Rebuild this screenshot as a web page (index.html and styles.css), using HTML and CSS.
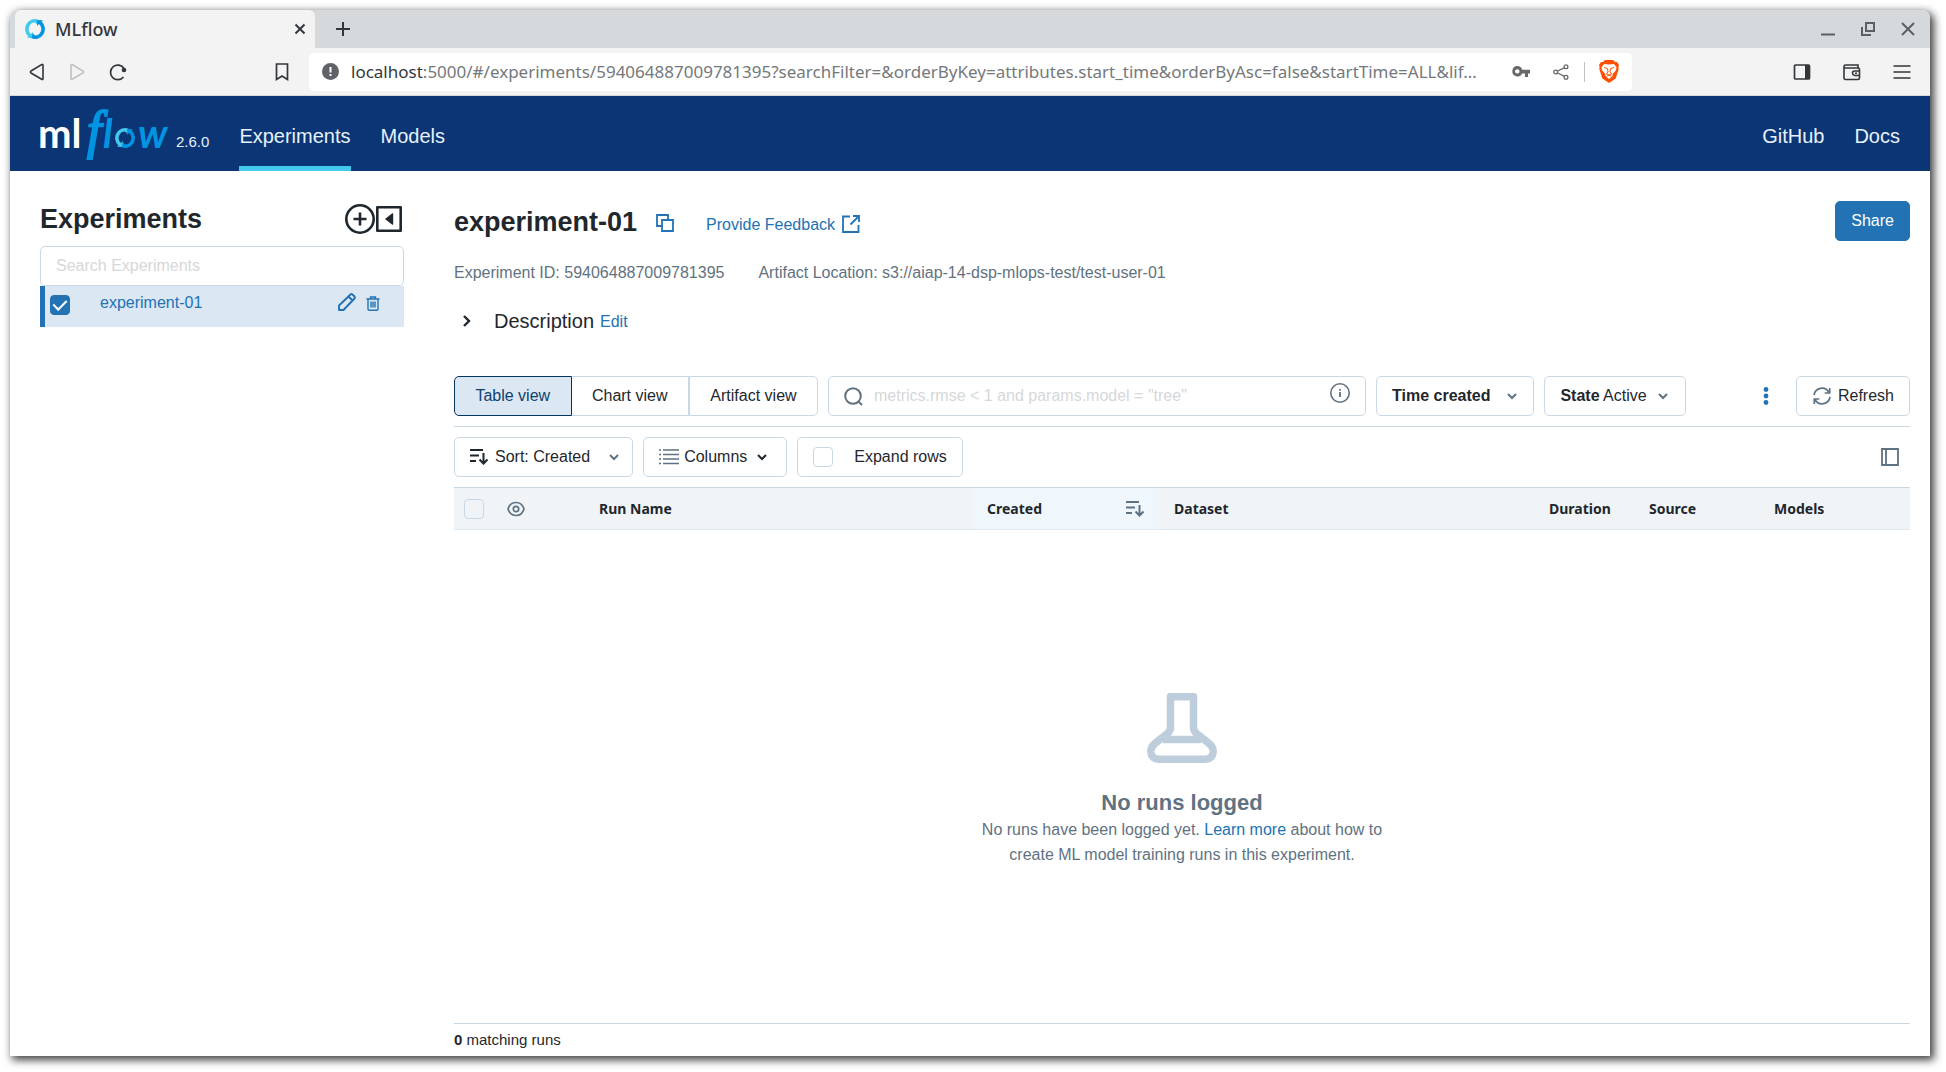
FILE: index.html
```html
<!DOCTYPE html>
<html lang="en">
<head>
<meta charset="utf-8">
<meta name="viewport" content="width=device-width, initial-scale=1">
<title>MLflow</title>
<link rel="stylesheet" href="styles.css">
</head>
<body>
<svg class="defs" width="0" height="0" aria-hidden="true">
  <defs>
    <symbol id="ring" viewBox="0 0 20 20">
      <path fill="#43c9ed" d="M13.6 .7A10 10 0 0 0 3.4 17.5L2 18.8l5.9.2V13L6 14.9A6.4 6.4 0 0 1 10 3.600l2.200 2.200z"/>
      <path fill="#0194e2" d="M6.400 19.300A10 10 0 0 0 16.600 2.500L18 1.200l-5.900-.2V7L14 5.100A6.400 6.400 0 0 1 10 16.400l-2.200-2.200z"/>
    </symbol>
    <symbol id="chevron" viewBox="0 0 12 12"><path d="M2 4l4 4 4-4" fill="none" stroke="currentColor" stroke-width="2"/></symbol>
    <symbol id="sort" viewBox="0 0 18 18"><path d="M0 2h13M0 7.500h9M0 13h6M13.500 5v10M9.500 11.500l4 4 4-4" fill="none" stroke="currentColor" stroke-width="2"/></symbol>
  </defs>
</svg>

<div class="window">
  <div class="tabstrip">
    <div class="tab">
      <svg class="i20"><use href="#ring"/></svg>
      <span class="tab-title">MLflow</span>
      <button class="plain" aria-label="Close tab"><svg width="12" height="12" viewBox="0 0 12 12"><path d="M1.500 1.500l9 9M10.500 1.500l-9 9" stroke="#33373b" stroke-width="2"/></svg></button>
    </div>
    <button class="plain new-tab" aria-label="New tab"><svg width="16" height="16" viewBox="0 0 16 16"><path d="M8 1v14M1 8h14" stroke="#33373b" stroke-width="2"/></svg></button>
    <div class="window-controls">
      <button class="plain" aria-label="Minimize"><svg width="14" height="14" viewBox="0 0 14 14"><path d="M0 12.500h14" stroke="#5b6063" stroke-width="2"/></svg></button>
      <button class="plain" aria-label="Restore"><svg width="14" height="14" viewBox="0 0 14 14"><path d="M5 1h8v8H5zM1 5v8h9" fill="none" stroke="#5b6063" stroke-width="2"/></svg></button>
      <button class="plain" aria-label="Close window"><svg width="14" height="14" viewBox="0 0 14 14"><path d="M1 1l12 12M13 1L1 13" stroke="#5b6063" stroke-width="2"/></svg></button>
    </div>
  </div>

  <div class="toolbar">
    <div class="history">
      <button class="plain" aria-label="Back"><svg width="16" height="18" viewBox="0 0 16 18"><path d="M13.500 1.500Q14 1 14 2.500v13q0 1.500-1.300.7L2 10Q.8 9 2 8L12.700 1.500z" fill="none" stroke="#33373b" stroke-width="1.600"/></svg></button>
      <button class="plain" aria-label="Forward" disabled><svg width="16" height="18" viewBox="0 0 16 18"><path d="M2.500 1.500Q2 1 2 2.500v13q0 1.500 1.300.7L14 10q1.200-1 0-2L3.300 1.500z" fill="none" stroke="#bcbdbe" stroke-width="1.500"/></svg></button>
      <button class="plain" aria-label="Reload"><svg width="18" height="18" viewBox="0 0 18 18"><path d="M15 5.500A7.300 7.300 0 1 0 14.500 14" fill="none" stroke="#33373b" stroke-width="1.700"/><circle cx="15" cy="7" r="2.300" fill="#33373b"/></svg></button>
    </div>
    <button class="plain bookmark" aria-label="Bookmark this page"><svg width="14" height="18" viewBox="0 0 14 18"><path d="M1.500 1h11v15.500L7 13l-5.500 3.500z" fill="none" stroke="#33373b" stroke-width="1.700"/></svg></button>
    <div class="omnibox">
      <svg class="site-info" width="17" height="17" viewBox="0 0 17 17"><circle cx="8.500" cy="8.500" r="8.500" fill="#5f6368"/><path d="M8.500 4v5.500M8.500 11v2" stroke="#fff" stroke-width="2"/></svg>
      <label for="url">localhost</label>
      <input id="url" class="url" type="text" value=":5000/#/experiments/594064887009781395?searchFilter=&amp;orderByKey=attributes.start_time&amp;orderByAsc=false&amp;startTime=ALL&amp;lif…">
      <button class="plain" aria-label="Passwords"><svg width="18" height="12" viewBox="0 0 18 12"><path fill-rule="evenodd" fill="#66696c" d="M5.300 0a5.200 5.200 0 0 1 4.900 3.700H18v3.800h-2V11h-3V7.500h-2.800A5.200 5.200 0 1 1 5.300 0zm0 3.200a2.200 2.200 0 1 0 .01 0z"/></svg></button>
      <button class="plain share-page" aria-label="Share this page"><svg width="16" height="16" viewBox="0 0 16 16" fill="none" stroke="#66696c" stroke-width="1.300"><circle cx="2.700" cy="8" r="1.900"/><circle cx="13" cy="2.800" r="1.900"/><circle cx="13" cy="13.200" r="1.900"/><path d="M4.500 7l6.700-3.200M4.500 9l6.700 3.200"/></svg></button>
      <span class="divider"></span>
      <button class="plain" aria-label="Brave Shields"><svg width="20" height="23" viewBox="0 0 20 23"><path fill="#ff5000" d="M6 0h8l2 2h2l2 3-.6 2 .3 2-3 9.500L10 23l-6.700-4.500L.3 9l.3-2L0 5l2-3h2z"/><path fill="#fff" d="M5 4l5 .6L15 4l2.500 3.300-.5 3-3.500 4 .2 1.700L10 19l-3.700-3 .2-1.700-3.500-4-.5-3z"/><path fill="none" stroke="#ff5000" stroke-width="1" d="M5 7.500l3.500 1.200L9 12l-1.500 2 2.500 1 2.500-1L11 12l.5-3.300L15 7.500M7.500 16.500L10 15l2.500 1.500"/></svg></button>
    </div>
    <div class="browser-actions">
      <button class="plain" aria-label="Sidebar"><svg width="18" height="18" viewBox="0 0 18 18"><rect x="1.500" y="2" width="15" height="14" rx="1" fill="none" stroke="#33373b" stroke-width="1.700"/><path d="M12 2h5v14h-5z" fill="#33373b"/></svg></button>
      <button class="plain" aria-label="Wallet"><svg width="18" height="18" viewBox="0 0 18 18" fill="none" stroke="#33373b" stroke-width="1.600"><path d="M15 5V2H2.500Q1 2 1 3.500V15q0 1.500 1.500 1.500H15q1.500 0 1.500-1.500V6.500Q16.500 5 15 5H1M17 8h-5.500Q9.500 8 9.500 10t2 2.500H17M12 10.300h2"/></svg></button>
      <button class="plain" aria-label="Menu"><svg width="18" height="18" viewBox="0 0 18 18"><path d="M.5 3h17M.5 9h17M.5 15h17" stroke="#33373b" stroke-width="1.700"/></svg></button>
    </div>
  </div>

  <header class="header">
    <a class="logo" href="#home" aria-label="MLflow home">
      <svg width="134" height="56" viewBox="0 0 134 56">
        <text class="logo-ml" x="-1" y="42">ml</text>
        <text class="logo-f" x="48" y="42">f</text>
        <text class="logo-low" x="64" y="42">l</text>
        <use href="#ring" x="76" y="22" width="20" height="20"/>
        <text class="logo-low" x="99" y="42">w</text>
      </svg>
    </a>
    <span class="version">2.6.0</span>
    <nav class="nav">
      <a class="active" href="#experiments">Experiments</a>
      <a href="#models">Models</a>
    </nav>
    <nav class="nav nav-right">
      <a href="#github">GitHub</a>
      <a href="#docs">Docs</a>
    </nav>
  </header>

  <div class="content">
    <aside class="sidebar">
      <div class="sidebar-head">
        <h2>Experiments</h2>
        <button class="plain" aria-label="Create experiment"><svg width="30" height="30" viewBox="0 0 30 30" fill="none" stroke="#1f272d"><circle cx="15" cy="15" r="13.700" stroke-width="2.600"/><path d="M15 8.500v13M8.500 15h13" stroke-width="2.600"/></svg></button>
        <button class="plain" aria-label="Hide experiment list"><svg width="28" height="28" viewBox="0 0 28 28"><path d="M2.300 2.300h23.400v23.400H2.300z" fill="none" stroke="#1f272d" stroke-width="2.600" stroke-linejoin="round"/><path d="M10 14l7-5.500q1.200-.7 1.200.8v9.400q0 1.500-1.200.8z" fill="#1f272d"/></svg></button>
      </div>
      <input class="search-experiments" type="text" placeholder="Search Experiments" aria-label="Search Experiments">
      <div class="experiment-row">
        <input id="exp1" class="check" type="checkbox" checked aria-label="Select experiment-01">
        <a href="#experiment-01">experiment-01</a>
        <button class="plain" aria-label="Rename"><svg width="18" height="18" viewBox="0 0 18 18" fill="none" stroke="#2272b4" stroke-width="1.900" stroke-linejoin="round"><path d="M1 17v-4.500L12.500 1.500q1-.8 2 0l2 2q.8 1 0 2L5.500 17zM10.500 3.500l4 4"/></svg></button>
        <button class="plain" aria-label="Delete"><svg width="14" height="15" viewBox="0 0 14 15" fill="none" stroke="#2272b4" stroke-width="1.400"><path d="M.5 3h13M4.500 3V1h5v2M2 3v10q0 1.300 1.300 1.300h7.400Q12 14.300 12 13V3M5 5.500v6M7 5.500v6M9 5.500v6"/></svg></button>
      </div>
    </aside>

    <main class="main">
      <div class="title-row">
        <h1>experiment-01</h1>
        <button class="plain" aria-label="Copy name"><svg width="18" height="18" viewBox="0 0 18 18" fill="none" stroke="#2272b4" stroke-width="1.800"><path d="M6 6h11v11H6z"/><path d="M6 12H1V1h11v5"/></svg></button>
        <a class="feedback" href="#feedback">Provide Feedback <svg width="18" height="18" viewBox="0 0 18 18" fill="none" stroke="#2272b4" stroke-width="1.800"><path d="M8 1.500H1V17h15.500v-7M11 1h6v6M17 1L8.500 9.500"/></svg></a>
        <button class="btn primary">Share</button>
      </div>
      <div class="meta"><span>Experiment ID: 594064887009781395</span><span>Artifact Location: s3://aiap-14-dsp-mlops-test/test-user-01</span></div>
      <div class="description">
        <button class="plain" aria-label="Expand description"><svg width="12" height="14" viewBox="0 0 12 14"><path d="M3 2l5 5-5 5" fill="none" stroke="#1f272d" stroke-width="2.400"/></svg></button>
        <span class="description-title">Description</span>
        <a href="#edit">Edit</a>
      </div>

      <div class="filters">
        <div class="segmented">
          <button class="btn selected">Table view</button>
          <button class="btn">Chart view</button>
          <button class="btn">Artifact view</button>
        </div>
        <div class="run-search">
          <svg width="19" height="19" viewBox="0 0 19 19" fill="none" stroke="#5f7281" stroke-width="2"><circle cx="9" cy="9" r="7.800"/><path d="M14 14l4 4"/></svg>
          <input type="text" placeholder="metrics.rmse &lt; 1 and params.model = &quot;tree&quot;" aria-label="Search runs">
          <button class="plain info" aria-label="Search help"><svg width="20" height="20" viewBox="0 0 20 20"><circle cx="10" cy="10" r="9.200" fill="none" stroke="#5f7281" stroke-width="1.600"/><path d="M10 9v5M10 6v1.800" stroke="#5f7281" stroke-width="1.800"/></svg></button>
        </div>
        <button class="btn time"><b>Time created</b><svg class="i12 muted"><use href="#chevron"/></svg></button>
        <button class="btn state"><span><b>State</b> Active</span><svg class="i12 muted"><use href="#chevron"/></svg></button>
        <button class="plain more" aria-label="More"><svg width="6" height="18" viewBox="0 0 6 18" fill="#2272b4"><circle cx="3" cy="2.500" r="2.400"/><circle cx="3" cy="9" r="2.400"/><circle cx="3" cy="15.500" r="2.400"/></svg></button>
        <button class="btn refresh"><svg width="20" height="20" viewBox="0 0 20 20" fill="none" stroke="#5f7281" stroke-width="1.700"><path d="M2 9A8 8 0 0 1 17 6.500M18 11A8 8 0 0 1 3 13.500M17.700 2v5h-5M2.300 18v-5h5"/></svg>Refresh</button>
      </div>

      <div class="table-tools">
        <button class="btn sort"><svg class="i18"><use href="#sort"/></svg>Sort: Created<svg class="i12 muted"><use href="#chevron"/></svg></button>
        <button class="btn columns"><svg width="20" height="18" viewBox="0 0 20 18"><path d="M4 2h16M4 6.500h16M4 11h16M4 15.500h16M0 2h2M0 6.500h2M0 11h2M0 15.500h2" stroke="#5f7281" stroke-width="1.600"/></svg>Columns<svg class="i12"><use href="#chevron"/></svg></button>
        <label class="btn expand"><input class="check" type="checkbox">Expand rows</label>
        <button class="plain panel" aria-label="Toggle side panel"><svg width="18" height="18" viewBox="0 0 18 18"><path d="M1 1h16v16H1zM5 1v16" fill="none" stroke="#5f7281" stroke-width="1.800"/></svg></button>
      </div>

      <table class="runs">
        <colgroup><col class="c-check"><col class="c-eye"><col class="c-name"><col class="c-created"><col><col class="c-duration"><col class="c-source"><col class="c-models"></colgroup>
        <thead>
          <tr>
            <th class="tight"><input class="check" type="checkbox" aria-label="Select all runs"></th>
            <th class="tight"><svg width="18" height="16" viewBox="0 0 18 16" fill="none" stroke="#5f7281" stroke-width="1.700"><path d="M1 8Q3 1.500 9 1.500T17 8Q15 14.500 9 14.500T1 8z"/><circle cx="9" cy="8" r="2.700"/></svg></th>
            <th>Run Name</th>
            <th class="sorted"><div class="th-sort">Created<svg class="i18 muted"><use href="#sort"/></svg></div></th>
            <th>Dataset</th>
            <th>Duration</th>
            <th>Source</th>
            <th>Models</th>
          </tr>
        </thead>
      </table>

      <div class="empty">
        <svg width="70" height="70" viewBox="0 0 70 70" fill="none" stroke="#becddb" stroke-width="7.500" stroke-linejoin="round"><path d="M23.500 3.700h23V34q0 4 3 6.500l12 9.500q5 4 4.700 9-.7 7.200-8 7.200H12q-7.500 0-8.200-7.200-.3-5 4.700-9l12-9.500q3-2.500 3-6.500z"/><path d="M16 46.500h38"/></svg>
        <h3>No runs logged</h3>
        <p>No runs have been logged yet. <a href="#learn">Learn more</a> about how to create ML model training runs in this experiment.</p>
      </div>

      <footer class="count"><b>0</b> matching runs</footer>
    </main>
  </div>
</div>
</body>
</html>
```
FILE: styles.css
```css
* { box-sizing: border-box; }

body {
  margin: 0;
  min-height: 100vh;
  padding: 10px 16px 16px 10px;
  display: flex;
  background: #fff;
  color: #1f272d;
  font: 16px/20px "Liberation Sans", Arial, sans-serif;
}

h1, h2, h3, p { margin: 0; }
a { color: #2272b4; text-decoration: none; }
svg { display: block; flex: none; }
button, input { font: inherit; color: inherit; }
.defs { position: absolute; }
.plain { display: block; padding: 0; border: 0; background: none; flex: none; }
.i12 { width: 12px; height: 12px; }
.i18 { width: 18px; height: 18px; }
.i20 { width: 20px; height: 20px; }
.muted { color: #5f7281; }

.window {
  flex: 1;
  min-width: 0;
  display: flex;
  flex-direction: column;
  background: #fff;
  border-radius: 8px 8px 0 0;
  box-shadow: 3px 3px 8px 1px rgba(0, 0, 0, .75);
}

/* Browser chrome */
.tabstrip {
  display: flex;
  align-items: center;
  height: 38px;
  padding: 0 15px 0 5px;
  background: #d5d9dc;
  border-radius: 8px 8px 0 0;
  font-family: "Noto Sans", sans-serif;
}
.tab {
  display: flex;
  align-items: center;
  gap: 10px;
  width: 300px;
  height: 38px;
  padding: 0 9px 0 10px;
  background: #f3f3f3;
  border-radius: 6px 6px 0 0;
}
.tab-title { flex: 1; font-size: 18px; font-weight: 500; color: #33373b; }
.new-tab { margin-left: 20px; }
.window-controls { display: flex; gap: 26px; margin-left: auto; }

.toolbar {
  display: flex;
  align-items: center;
  height: 48px;
  padding: 0 19px;
  background: #f3f3f3;
  border-bottom: 1px solid #d5d9dc;
}
.history { display: flex; gap: 24px; }
.bookmark { margin-left: 148px; margin-right: 20px; }
.omnibox {
  flex: 1;
  min-width: 0;
  max-width: 1323px;
  display: flex;
  align-items: center;
  height: 38px;
  padding: 0 13px;
  background: #fff;
  border-radius: 5px;
  font: 17px/24px "Noto Sans", sans-serif;
  color: #33373b;
}
.site-info { margin-right: 12px; }
.url {
  flex: 1;
  min-width: 0;
  padding: 0;
  border: 0;
  background: none;
  color: #75787b;
  text-overflow: ellipsis;
}
.share-page { margin-left: 23px; }
.divider { width: 1px; height: 20px; margin: 0 14px 0 15px; background: #bfc2c4; }
.browser-actions { display: flex; gap: 32px; margin-left: auto; }

/* App header */
.header {
  display: flex;
  height: 75px;
  padding: 0 30px 0 29px;
  background: #0b3574;
}
.logo { padding-top: 10px; }
.logo svg { overflow: visible; }
.logo-ml { font: 700 40px Lato, sans-serif; fill: #fff; }
.logo-f { font: italic 52px "Liberation Serif", serif; fill: #0194e2; stroke: #0194e2; stroke-width: 2px; }
.logo-low { font: italic 700 40px Lato, sans-serif; fill: #0194e2; }
.version { margin: 37px 30px 0 3px; font-size: 15px; line-height: 18px; color: #e7f1fb; }
.nav { display: flex; gap: 30px; font-size: 20px; line-height: 24px; }
.nav a { padding-top: 28px; color: #e7f1fb; }
.nav .active { border-bottom: 5px solid #43c9ed; }
.nav-right { margin-left: auto; }

/* Page */
.content { flex: 1; display: flex; gap: 50px; padding: 30px 20px 0 30px; }
.sidebar { width: 364px; flex: none; }
.sidebar-head { display: flex; align-items: center; height: 36px; margin-bottom: 9px; padding-right: 1px; }
h1, h2 { font-size: 27px; line-height: 34px; }
.sidebar-head h2 { flex: 1; }
.search-experiments {
  display: block;
  width: 100%;
  height: 40px;
  padding: 0 15px;
  border: 1px solid #c9d8e6;
  border-radius: 5px;
}
::placeholder { color: #d5d7d9; opacity: 1; }
.experiment-row {
  display: flex;
  align-items: flex-start;
  height: 41px;
  padding: 7px 24px 0 5px;
  background: #dbe7f3;
  border-left: 5px solid #2272b4;
}
.experiment-row a { flex: 1; margin-left: 30px; }
.experiment-row .check { margin-top: 2px; }
.experiment-row .plain + .plain { margin: 3px 0 0 10px; }

.check {
  appearance: none;
  flex: none;
  display: block;
  width: 20px;
  height: 20px;
  margin: 0;
  border: 1px solid #c9d8e6;
  border-radius: 4px;
  background: #fff;
}
.check:checked { display: grid; place-items: center; border-color: #2272b4; background: #2272b4; }
.check:checked::after {
  content: "";
  width: 6px;
  height: 11px;
  margin-bottom: 3px;
  border: solid #fff;
  border-width: 0 2px 2px 0;
  transform: rotate(45deg);
}

.main { flex: 1; min-width: 0; display: flex; flex-direction: column; }
.title-row { display: flex; align-items: center; height: 40px; }
.title-row h1 { margin-top: 2px; }
.title-row .plain { margin: 4px 32px 0 19px; }
.feedback { display: flex; gap: 7px; margin-top: 8px; }
.btn {
  display: flex;
  align-items: center;
  height: 40px;
  padding: 0 15px;
  border: 1px solid #c9d8e6;
  border-radius: 5px;
  background: #fff;
  white-space: nowrap;
}
.primary { margin-left: auto; border-color: #2272b4; background: #2272b4; color: #fff; }
.meta { display: flex; gap: 34px; margin-top: 22px; color: #5f7281; }
.description { display: flex; align-items: center; margin: 26px 0 43px; height: 24px; padding-left: 7px; }
.description-title { margin: 0 6px 0 21px; font-size: 20px; line-height: 24px; }
.description a { margin-top: 2px; }

.filters {
  display: flex;
  gap: 10px;
  padding-bottom: 10px;
  border-bottom: 1px solid #c9d8e6;
}
.segmented { display: flex; min-width: 364px; }
.segmented .btn { flex: auto; justify-content: center; border-radius: 0; }
.segmented .btn + .btn { border-left-width: 0; }
.segmented .btn:first-child { border-radius: 5px 0 0 5px; }
.segmented .btn:last-child { border-left-width: 1px; border-radius: 0 5px 5px 0; }
.segmented .selected { border-color: #04355d; background: #dbe7f3; color: #0e4170; }
.run-search {
  flex: 1;
  max-width: 538px;
  display: flex;
  align-items: center;
  gap: 11px;
  height: 40px;
  padding: 0 15px;
  border: 1px solid #c9d8e6;
  border-radius: 5px;
}
.run-search input { flex: 1; min-width: 0; padding: 0; border: 0; background: none; }
.info { margin-bottom: 6px; }
.time { gap: 16px; }
.state { gap: 10px; padding-right: 16px; }
.more { margin: 0 17px 0 auto; }
.refresh { gap: 6px; }

.table-tools { display: flex; align-items: center; gap: 10px; padding: 10px 0; }
.sort { gap: 7px; padding-right: 12px; }
.sort .muted { margin-left: 11px; }
.columns { gap: 5px; padding-right: 18px; }
.columns .i12 { margin-left: 4px; }
.expand .check { margin-right: 21px; }
.panel { margin: 0 11px 0 auto; }

.runs { width: 100%; table-layout: fixed; border-collapse: collapse; }
.c-check { width: 43px; }
.c-eye { width: 87px; }
.c-name { width: 388px; }
.c-created { width: 187px; }
.c-duration { width: 100px; }
.c-source { width: 125px; }
.c-models { width: 151px; }
.runs th {
  height: 42px;
  padding: 0 15px;
  background: #f0f4f7;
  border-top: 1px solid #c9d8e6;
  border-bottom: 1px solid #dce7f0;
  text-align: left;
  font: 700 14px/20px "Noto Sans", sans-serif;
}
.runs .tight { padding: 0 2px 0 10px; }
.runs .check { background: none; }
.runs .sorted { background: #eff7fd; }
.th-sort { display: flex; align-items: center; justify-content: space-between; }

.empty {
  flex: 1;
  display: flex;
  flex-direction: column;
  align-items: center;
  justify-content: center;
  padding-top: 7px;
  color: #5f7281;
  text-align: center;
}
.empty h3 { margin-top: 26px; font-size: 22px; line-height: 28px; }
.empty p { max-width: 420px; line-height: 25px; }
.count { padding: 6px 0; border-top: 1px solid #c9d8e6; font-size: 15px; }
```
